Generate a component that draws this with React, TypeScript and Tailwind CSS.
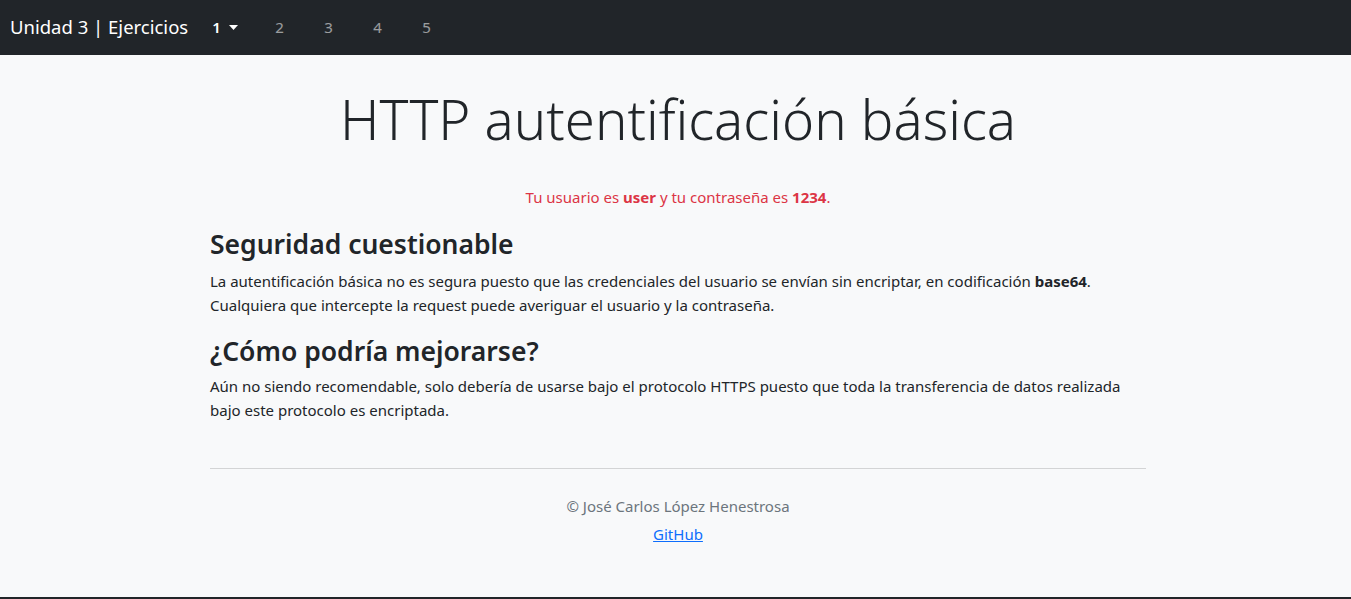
const font = { fontFamily: '"Noto Sans", "Open Sans", sans-serif' };

function NavBar() {
  const items = ["2", "3", "4", "5"];
  return (
    <nav className="h-[55px] bg-[#212529] flex items-center px-[10px]">
      <span className="text-white text-[18.5px] leading-none mr-[23px]">Unidad 3 | Ejercicios</span>
      <div className="flex items-center">
        <span className="flex items-center text-white text-[15px] font-semibold w-[48px] justify-start pl-[1px]">
          1
          <svg className="ml-[8px]" width="9" height="5" viewBox="0 0 9 5">
            <path d="M0 0h9L4.5 5z" fill="currentColor" />
          </svg>
        </span>
        {items.map((n) => (
          <span key={n} className="text-[15px] text-white/55 w-[49px] pl-[16px]">
            {n}
          </span>
        ))}
      </div>
    </nav>
  );
}

export default function App() {
  return (
    <div className="min-h-screen flex flex-col bg-[#f8f9fa] text-[#212529]" style={font}>
      <NavBar />
      <main className="flex-1 pl-[5px]">
        <div className="w-[936px] mx-auto">
          <h1 className="text-center text-[54.5px] font-light leading-[1.2] mt-[32px] mb-[33px]">
            HTTP autentificación básica
          </h1>
          <p className="text-center text-[#dc3545] text-[15px] leading-[24px] mb-[20px]">
            Tu usuario es <b className="font-bold">user</b> y tu contraseña es{" "}
            <b className="font-bold">1234</b>.
          </p>
          <h3 className="text-[26.5px] font-semibold leading-[1.2] mb-[8px]">Seguridad cuestionable</h3>
          <p className="text-[15px] leading-[24px] mb-[19px]">
            La autentificación básica no es segura puesto que las credenciales del usuario se envían sin
            encriptar, en codificación <b className="font-bold">base64</b>. Cualquiera que intercepte la
            request puede averiguar el usuario y la contraseña.
          </p>
          <h3 className="text-[26.5px] font-semibold leading-[1.2] mb-[6px]">¿Cómo podría mejorarse?</h3>
          <p className="text-[15px] leading-[24px]">
            Aún no siendo recomendable, solo debería de usarse bajo el protocolo HTTPS puesto que toda la
            transferencia de datos realizada bajo este protocolo es encriptada.
          </p>
          <hr className="mt-[46px] border-0 border-t border-[#d3d4d5]" />
          <footer className="text-center text-[15px] leading-[24px] pt-[25px]">
            <p className="text-[#6c757d] mb-[4px]">© José Carlos López Henestrosa</p>
            <a href="#" className="text-[#0d6efd] underline">
              GitHub
            </a>
          </footer>
        </div>
      </main>
      <div className="h-[2px] bg-[#212529]" />
    </div>
  );
}
